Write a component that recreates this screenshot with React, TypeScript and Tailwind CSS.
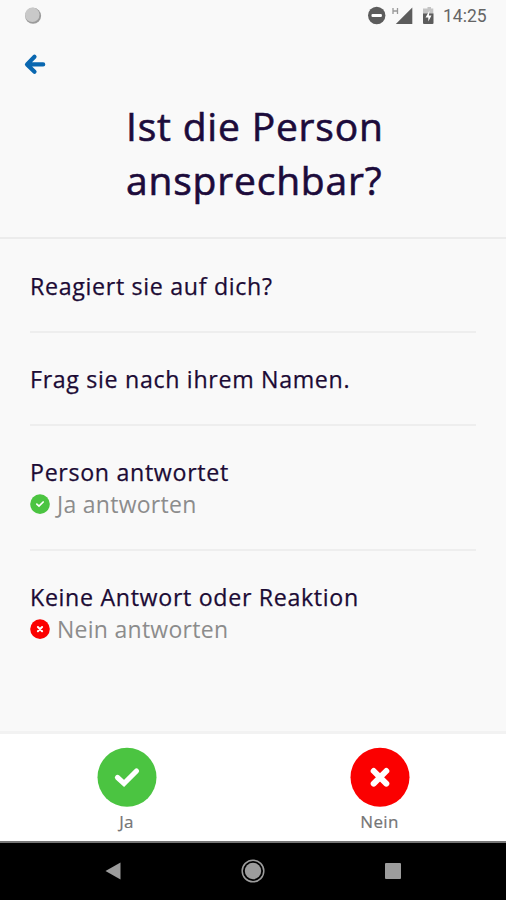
import React from "react";

const GREEN = "#4bc441";
const RED = "#fb0000";

function Check({ size }: { size: number }) {
  return (
    <svg width={size} height={size} viewBox="0 0 60 60" className="shrink-0">
      <circle cx="30" cy="30.3" r="29.5" fill={GREEN} />
      <path d="M20.5 30.5 L27 36.5 L39.5 24" fill="none" stroke="#fff" strokeWidth="5.2" strokeLinecap="round" strokeLinejoin="miter" />
    </svg>
  );
}

function Cross({ size }: { size: number }) {
  return (
    <svg width={size} height={size} viewBox="0 0 60 60" className="shrink-0">
      <circle cx="30" cy="30.3" r="29.5" fill={RED} />
      <path d="M23.7 24 L36.3 36.6 M36.3 24 L23.7 36.6" fill="none" stroke="#fff" strokeWidth="6" strokeLinecap="round" />
    </svg>
  );
}

function StatusBar() {
  return (
    <div className="flex h-8 items-center justify-between pl-6 pr-[18px]">
      <svg width="18" height="18" viewBox="0 0 18 18">
        <circle cx="9.1" cy="8.8" r="8" fill="#9b9b9b" />
        <circle cx="8.3" cy="7.8" r="7.2" fill="#c9c9c9" />
      </svg>
      <div className="flex items-center">
        <svg width="70" height="24" viewBox="0 0 70 24">
          <circle cx="8.7" cy="11.5" r="8.7" fill="#5c5c5c" />
          <rect x="3.5" y="9.9" width="10.4" height="3.2" rx="1" fill="#fff" />
          <path d="M25 4v6M29.5 4v6M25 7h4.5" stroke="#999" strokeWidth="1.3" fill="none" />
          <path d="M27.8 20 L44.3 3.5 V20Z" fill="#5c5c5c" />
          <path d="M57.5 4.5h2V3h3.5v1.5h2.3V10H55V4.5Z" fill="#c4c4c4" />
          <path d="M55 9.5h10.5V19a1 1 0 0 1-1 1h-8.5a1 1 0 0 1-1-1Z" fill="#5c5c5c" />
          <path d="M61.5 6.5 L57.5 13.5h2.8v4L63.5 11.5h-2.6Z" fill="#fff" />
        </svg>
        <span className="ml-[5px] w-[45px] whitespace-nowrap font-['Roboto',sans-serif] text-[17.5px] leading-6 text-[#656565]">14:25</span>
      </div>
    </div>
  );
}

function Item({ title, children }: { title: string; children?: React.ReactNode }) {
  return (
    <li className="border-b-2 border-[#eeeeee] pb-[29px] pt-[30px] last:border-b-0">
      <p className="text-[23.2px] leading-8 tracking-[0.68px] text-[#1c0b35] [-webkit-text-stroke:0.25px_#1c0b35]">{title}</p>
      {children}
    </li>
  );
}

export default function App() {
  return (
    <div className="flex h-[900px] w-[506px] flex-col overflow-hidden bg-[#f9f9f9] font-['Open_Sans',sans-serif]">
      <header className="h-[239px] shrink-0 border-b-2 border-[#ececec]">
        <StatusBar />
        <button className="ml-6 mt-[21px] block" aria-label="Zurück">
          <svg width="22" height="22" viewBox="0 0 22 22" fill="none" stroke="#0967b0" strokeWidth="4.2" strokeLinecap="round" strokeLinejoin="round">
            <path d="M10.5 3.7 L3 11.4 L10.5 18.8 M4 11.4H19.2" />
          </svg>
        </button>
        <h1 className="ml-[126px] mt-[24px] whitespace-nowrap text-[39px] leading-[54px] tracking-[0.8px] text-[#1c0b3b] [-webkit-text-stroke:0.6px_#1c0b3b]">
          Ist die Person
          <br />
          ansprechbar?
        </h1>
      </header>
      <ul className="mx-[30px] min-h-0 flex-1 pt-px">
        <Item title="Reagiert sie auf dich?" />
        <Item title="Frag sie nach ihrem Namen." />
        <Item title="Person antwortet">
          <p className="flex h-8 items-center text-[23px] leading-8 tracking-[0.27px] text-[#8c8c8c]">
            <Check size={20} />
            <span className="ml-[7px]">Ja antworten</span>
          </p>
        </Item>
        <Item title="Keine Antwort oder Reaktion">
          <p className="flex h-8 items-center text-[23px] leading-8 tracking-[0.27px] text-[#8c8c8c]">
            <Cross size={20} />
            <span className="ml-[7px]">Nein antworten</span>
          </p>
        </Item>
      </ul>
      <div className="grid h-[110px] shrink-0 grid-cols-2 border-t-[3px] border-[#f2f2f2] bg-white text-[17px] leading-6 text-[#757575]">
        <button className="flex flex-col items-center pt-[13px]">
          <Check size={60} />
          <span className="mt-[3px] tracking-[0.2px] [-webkit-text-stroke:0.2px_#757575]">Ja</span>
        </button>
        <button className="flex flex-col items-center pt-[13px]">
          <Cross size={60} />
          <span className="mt-[3px] tracking-[0.3px] [-webkit-text-stroke:0.2px_#757575]">Nein</span>
        </button>
      </div>
      <nav className="grid h-[59px] shrink-0 grid-cols-[1fr_54px_1fr] items-center border-t-2 border-[#777] bg-black">
        <svg className="mb-px ml-[105px]" width="16" height="18" viewBox="0 0 16 18"><path d="M.5 9 L15.5 .5 V17.5Z" fill="#9c9c9c" /></svg>
        <svg className="mb-px justify-self-center" width="24" height="24" viewBox="0 0 24 24">
          <circle cx="12" cy="12" r="10.8" fill="none" stroke="#9c9c9c" strokeWidth="1.5" />
          <circle cx="12" cy="12" r="8.2" fill="#9c9c9c" />
        </svg>
        <div className="mb-px ml-[105px] h-4 w-4 rounded-[1px] bg-[#9c9c9c]" />
      </nav>
    </div>
  );
}
